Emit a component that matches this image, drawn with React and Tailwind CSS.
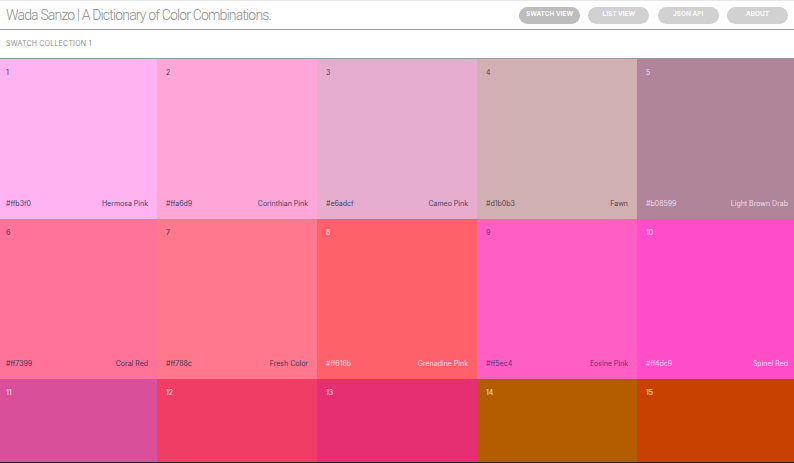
import React from "react";

const swatches = [
  { id: 1, hex: "#ffb3f0", name: "Hermosa Pink", bg: "bg-[#ffb3f0]", text: "text-[#3f4468]" },
  { id: 2, hex: "#ffa6d9", name: "Corinthian Pink", bg: "bg-[#ffa6d9]", text: "text-[#3f4468]" },
  { id: 3, hex: "#e6adcf", name: "Cameo Pink", bg: "bg-[#e6adcf]", text: "text-[#3f4468]" },
  { id: 4, hex: "#d1b0b3", name: "Fawn", bg: "bg-[#d1b0b3]", text: "text-[#4a4a55]" },
  { id: 5, hex: "#b08599", name: "Light Brown Drab", bg: "bg-[#b08599]", text: "text-[#eadfe6]" },
  { id: 6, hex: "#ff7399", name: "Coral Red", bg: "bg-[#ff7399]", text: "text-[#45355a]" },
  { id: 7, hex: "#ff788c", name: "Fresh Color", bg: "bg-[#ff788c]", text: "text-[#45355a]" },
  { id: 8, hex: "#ff616b", name: "Grenadine Pink", bg: "bg-[#ff616b]", text: "text-[#fbdde0]" },
  { id: 9, hex: "#ff5ec4", name: "Eosine Pink", bg: "bg-[#ff5ec4]", text: "text-[#5c3578]" },
  { id: 10, hex: "#ff4dc9", name: "Spinel Red", bg: "bg-[#ff4dc9]", text: "text-[#ffd6f2]" },
  { id: 11, bg: "bg-[#d94f99]", text: "text-[#f8e4f0]" },
  { id: 12, bg: "bg-[#f03d66]", text: "text-[#fbe4e8]" },
  { id: 13, bg: "bg-[#e62e73]", text: "text-[#fbe4ec]" },
  { id: 14, bg: "bg-[#b35c00]", text: "text-[#f2ebe0]" },
  { id: 15, bg: "bg-[#c74200]", text: "text-[#f6e8dc]" },
];

const navItems = ["SWATCH VIEW", "LIST VIEW", "JSON API", "ABOUT"];

function Swatch({ swatch, index }) {
  const first = index % 5 === 0;
  const last = index % 5 === 4;
  return (
    <div
      className={`flex flex-col justify-between pt-[9px] pb-[11px] text-[7px] leading-[9px] ${first ? "pl-[6px]" : "pl-[9px]"} ${last ? "pr-[6px]" : "pr-[9px]"} ${swatch.bg} ${swatch.text}`}
    >
      <span>{swatch.id}</span>
      {swatch.hex && (
        <div className="flex justify-between">
          <span>{swatch.hex}</span>
          <span>{swatch.name}</span>
        </div>
      )}
    </div>
  );
}

export default function App() {
  return (
    <div className="h-[463px] w-[794px] overflow-hidden bg-white font-['Inter',sans-serif]">
      <header className="flex h-[30px] items-center justify-between border-t border-b border-t-[#e8e8e8] border-b-[#999999] pl-[6px] pr-[6px]">
        <h1 className="font-['Roboto',sans-serif] text-[14px] font-light tracking-[-0.83px] text-[#8f8f8f]">
          Wada Sanzo | A Dictionary of Color Combinations.
        </h1>
        <nav className="flex gap-[8.33px]">
          {navItems.map((item, i) => (
            <a
              key={item}
              className={`flex h-[17px] w-[61px] items-center justify-center rounded-full text-[6.5px] font-semibold text-white ${i === 0 ? "bg-[#bdbdbd]" : "bg-[#d1d1d1]"}`}
            >
              {item}
            </a>
          ))}
        </nav>
      </header>
      <div className="flex h-[29px] items-center border-b border-[#999999] pl-[6px] text-[7px] tracking-[0.22px] text-[#8f8f8f]">
        SWATCH COLLECTION 1
      </div>
      <div className="grid grid-cols-[157px_160px_160px_160px_157px] grid-rows-[160px_160px_83px] border-b border-[#222222]">
        {swatches.map((s, i) => (
          <Swatch key={s.id} swatch={s} index={i} />
        ))}
      </div>
    </div>
  );
}
